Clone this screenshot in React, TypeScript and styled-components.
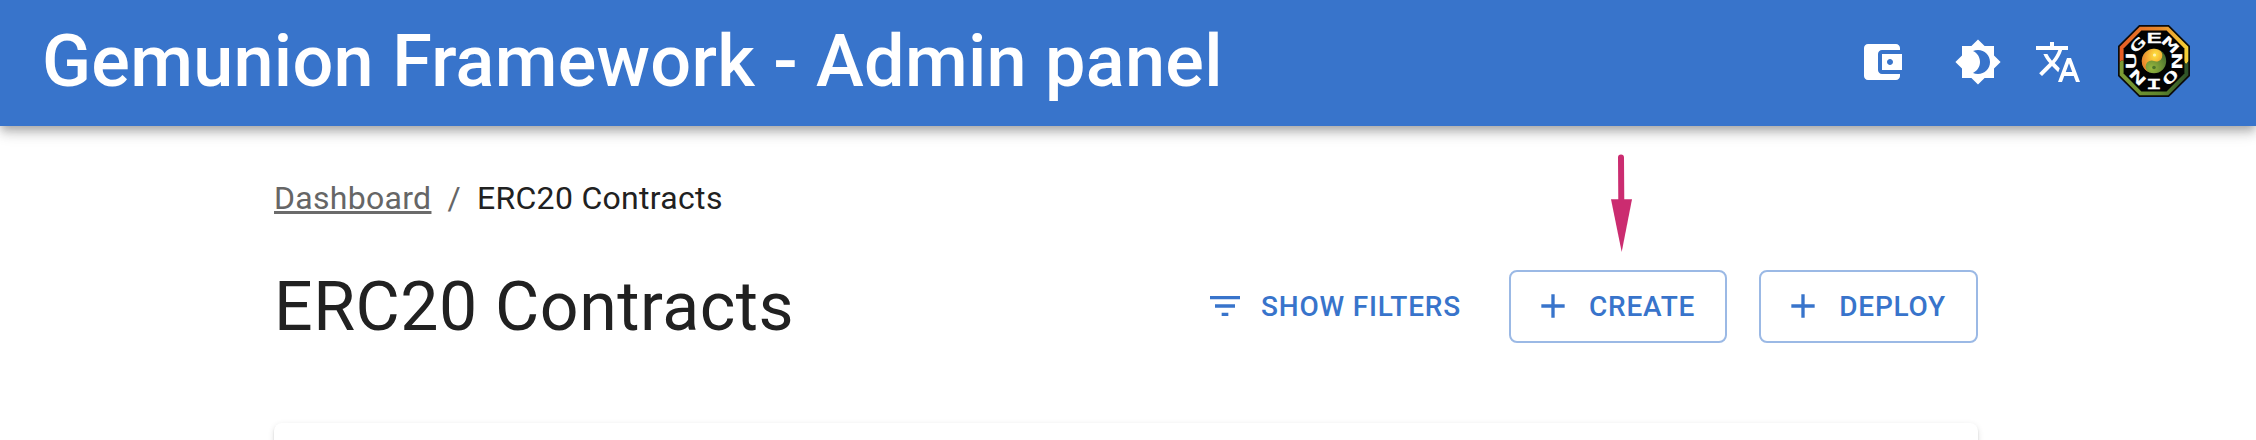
import React from "react";
import styled, { createGlobalStyle } from "styled-components";

const blue = "#3874cb";

const GlobalStyle = createGlobalStyle`
  * { box-sizing: border-box; }
  body {
    margin: 0;
    background: #fff;
    color: #212121;
    font-family: Roboto, "Liberation Sans", sans-serif;
    overflow: hidden;
  }
`;

const Page = styled.div`
  display: flex;
  flex-direction: column;
  height: 440px;
  overflow: hidden;
`;

const AppBar = styled.header`
  display: flex;
  align-items: center;
  flex: none;
  height: 126px;
  padding: 0 66px 0 42px;
  background: ${blue};
  color: #fff;
  box-shadow: 0 4px 8px -2px rgba(0, 0, 0, 0.2), 0 8px 10px 0 rgba(0, 0, 0, 0.14),
    0 2px 20px 0 rgba(0, 0, 0, 0.12);
`;

const Brand = styled.div`
  flex: 1;
  font-size: 72px;
  font-weight: 500;
  line-height: 84px;
  letter-spacing: 0.28px;
  white-space: nowrap;
  padding-bottom: 2px;
`;

const IconButton = styled.button<{ $gap: number }>`
  display: flex;
  padding: 0;
  border: 0;
  background: none;
  color: inherit;
  margin: 0 ${(p) => p.$gap}px 2px 0;
`;

const AvatarButton = styled(IconButton)`
  margin-bottom: 4px;
`;

const Glyph = styled.svg<{ $size: number }>`
  display: block;
  width: ${(p) => p.$size}px;
  height: ${(p) => p.$size}px;
  fill: currentColor;
`;

const Container = styled.main`
  width: 1704px;
  margin: 0 auto 0 274px;
  padding-top: 48px;
  display: flex;
  flex-direction: column;
`;

const Breadcrumbs = styled.nav`
  display: flex;
  align-items: center;
  height: 48px;
  font-size: 32px;
  line-height: 48px;
  letter-spacing: 0.3px;
  color: #666;
`;

const Crumb = styled.a`
  color: #666;
  text-decoration: underline;
  text-decoration-color: #6b6b6b;
`;

const Separator = styled.span`
  margin: 0 16px;
`;

const Current = styled.span`
  color: #212121;
`;

const Header = styled.div`
  display: flex;
  align-items: center;
  height: 84px;
  margin-top: 42px;
`;

const Title = styled.h1`
  flex: 1;
  margin: 0;
  padding-top: 2px;
  font-size: 68px;
  font-weight: 400;
  line-height: 84px;
  letter-spacing: 0.5px;
`;

const Actions = styled.div`
  display: flex;
  gap: 32px;
`;

const Button = styled.button<{ $outlined?: boolean }>`
  display: flex;
  align-items: center;
  gap: 16px;
  height: 73px;
  padding: ${(p) => (p.$outlined ? "0 30px 0 22px" : "0 16px 0 8px")};
  border: ${(p) => (p.$outlined ? "2px solid #9bb9e5" : "0")};
  border-radius: 8px;
  background: transparent;
  color: ${blue};
  font: 500 28px/49px Roboto, "Liberation Sans", sans-serif;
  letter-spacing: 0.8px;
  white-space: nowrap;
`;

const Paper = styled.section`
  height: 120px;
  margin-top: 75px;
  border-radius: 8px;
  background: #fff;
  box-shadow: 0 4px 2px -2px rgba(0, 0, 0, 0.2), 0 2px 2px 0 rgba(0, 0, 0, 0.14),
    0 2px 6px 0 rgba(0, 0, 0, 0.12);
`;

const Pointer = styled.svg`
  position: absolute;
  left: 1608px;
  top: 152px;
  width: 28px;
  height: 104px;
`;

const icons = {
  wallet:
    "M21 18v1c0 1.1-.9 2-2 2H5c-1.11 0-2-.9-2-2V5c0-1.1.89-2 2-2h14c1.1 0 2 .9 2 2v1h-9c-1.11 0-2 .9-2 2v8c0 1.1.89 2 2 2h9zm-9-2h10V8H12v8zm4-2.5c-.83 0-1.5-.67-1.5-1.5s.67-1.5 1.5-1.5 1.5.67 1.5 1.5-.67 1.5-1.5 1.5z",
  brightness:
    "M20 8.69V4h-4.69L12 .69 8.69 4H4v4.69L.69 12 4 15.31V20h4.69L12 23.31 15.31 20H20v-4.69L23.31 12 20 8.69zM12 18c-.89 0-1.74-.2-2.5-.55C11.56 16.5 13 14.42 13 12s-1.44-4.5-3.5-5.45C10.26 6.2 11.11 6 12 6c3.31 0 6 2.69 6 6s-2.69 6-6 6z",
  translate:
    "M12.87 15.07l-2.54-2.51.03-.03c1.74-1.94 2.98-4.17 3.71-6.53H17V4h-7V2H8v2H1v1.99h11.17C11.5 7.92 10.44 9.75 9 11.35 8.07 10.32 7.3 9.19 6.69 8h-2c.73 1.63 1.73 3.17 2.98 4.56l-5.09 5.02L4 19l5-5 3.11 3.11.76-2.04zM18.5 10h-2L12 22h2l1.12-3h4.75L21 22h2l-4.5-12zm-2.62 7l1.62-4.33L19.12 17h-3.24z",
  filter: "M10 18h4v-2h-4v2zM3 6v2h18V6H3zm3 7h12v-2H6v2z",
  add: "M19 13h-6v6h-2v-6H5v-2h6V5h2v6h6v2z",
};

const Icon = ({ name, size }: { name: keyof typeof icons; size: number }) => (
  <Glyph $size={size} viewBox="0 0 24 24" aria-hidden>
    <path d={icons[name]} />
  </Glyph>
);

const ring: [string, number][] = [
  ["E", 0], ["M", 45], ["N", 90], ["O", 135], ["I", 180], ["N", 225], ["U", 270], ["G", 315],
];

const Emblem = () => (
  <Glyph $size={72} viewBox="-36 -36 72 72" aria-label="Gemunion">
    <defs>
      <linearGradient id="warm" x1="0" y1="0" x2="1" y2="0">
        <stop offset="0" stopColor="#e85c24" />
        <stop offset="0.6" stopColor="#e88c2c" />
        <stop offset="1" stopColor="#f6d437" />
      </linearGradient>
      <linearGradient id="cool" x1="0" y1="0" x2="1" y2="0">
        <stop offset="0" stopColor="#7d9c35" />
        <stop offset="0.6" stopColor="#5d842d" />
        <stop offset="1" stopColor="#2c5027" />
      </linearGradient>
      <radialGradient id="sun" cx="0.6" cy="0.25" r="0.7">
        <stop offset="0" stopColor="#ffe43f" />
        <stop offset="1" stopColor="#e9822b" />
      </radialGradient>
      <radialGradient id="leaf" cx="0.4" cy="0.8" r="0.8">
        <stop offset="0" stopColor="#98b83e" />
        <stop offset="1" stopColor="#41692d" />
      </radialGradient>
    </defs>
    <path d="M-14.9-36H14.9L36-14.9V14.9L14.9 36H-14.9L-36 14.9V-14.9Z" fill="#0b0b0b" />
    <path d="M-14.2-34.3H14.2L34.3-14.2V0Q32 6 30 0H-30Q-34-2-34.3 3V-14.2Z" fill="url(#warm)" />
    <path d="M-34.3 3Q-34-2-30 0H30Q32 6 34.3 0V14.2L14.2 34.3H-14.2L-34.3 14.2Z" fill="url(#cool)" />
    <path d="M-12.6-30.4H12.6L30.4-12.6V12.6L12.6 30.4H-12.6L-30.4 12.6V-12.6Z" fill="#020202" />
    {ring.map(([letter, angle]) => (
      <g key={angle} transform={`rotate(${angle}) translate(0 -18.2) scale(2.05 1)`}>
        <text
          textAnchor="middle"
          fontFamily="DejaVu Sans Mono, monospace"
          fontWeight="400"
          fontSize="13.5"
          fill="#fff"
          stroke="#fff"
          strokeWidth="0.4"
        >
          {letter}
        </text>
      </g>
    ))}
    <circle r="12.2" fill="url(#leaf)" />
    <path
      d="M0 12.2A12.2 12.2 0 0 1 0-12.2A6.1 6.1 0 0 1 0 0A6.1 6.1 0 0 0 0 12.2Z"
      transform="rotate(22)"
      fill="url(#sun)"
    />
    <circle cx="0.5" cy="-6" r="1.6" fill="#fff3b0" />
    <circle cx="0" cy="6.5" r="1.8" fill="#4b752b" />
  </Glyph>
);

export default function App() {
  return (
    <Page>
      <GlobalStyle />
      <AppBar>
        <Brand>Gemunion Framework - Admin panel</Brand>
        <IconButton $gap={48} aria-label="Wallet">
          <Icon name="wallet" size={48} />
        </IconButton>
        <IconButton $gap={32} aria-label="Theme">
          <Icon name="brightness" size={48} />
        </IconButton>
        <IconButton $gap={36} aria-label="Language">
          <Icon name="translate" size={48} />
        </IconButton>
        <AvatarButton $gap={0} aria-label="Account">
          <Emblem />
        </AvatarButton>
      </AppBar>
      <Container>
        <Breadcrumbs>
          <Crumb>Dashboard</Crumb>
          <Separator>/</Separator>
          <Current>ERC20 Contracts</Current>
        </Breadcrumbs>
        <Header>
          <Title>ERC20 Contracts</Title>
          <Actions>
            <Button>
              <Icon name="filter" size={40} />
              SHOW FILTERS
            </Button>
            <Button $outlined>
              <Icon name="add" size={40} />
              CREATE
            </Button>
            <Button $outlined>
              <Icon name="add" size={40} />
              DEPLOY
            </Button>
          </Actions>
        </Header>
        <Paper />
      </Container>
      <Pointer viewBox="0 0 28 104" aria-hidden>
        <path d="M13 5.5L13.3 50" stroke="#cb2c70" strokeWidth="6" strokeLinecap="round" />
        <path d="M3 47.3H24L13.7 100Z" fill="#cb2c70" />
      </Pointer>
    </Page>
  );
}
